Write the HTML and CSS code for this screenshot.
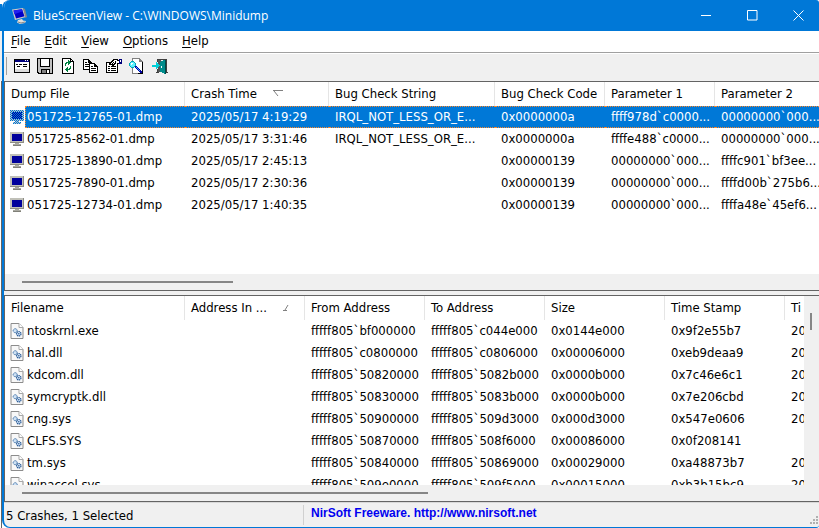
FILE: index.html
```html
<!DOCTYPE html>
<html lang="en">
<head>
    <meta charset="UTF-8">
    <meta name="viewport" content="width=device-width, initial-scale=1.0">
    <title>BlueScreenView</title>
    <link rel="stylesheet" href="styles.css">
</head>
<body>
    <!-- shared icons -->
    <svg class="defs" width="0" height="0">
        <defs>
            <pattern id="dither" width="2" height="2" patternUnits="userSpaceOnUse">
                <rect width="2" height="2" fill="#0078d7"/>
                <rect width="1" height="1" fill="#00009c"/>
                <rect x="1" y="1" width="1" height="1" fill="#00009c"/>
            </pattern>
            <pattern id="dither-light" width="2" height="2" patternUnits="userSpaceOnUse">
                <rect width="2" height="2" fill="#0078d7"/>
                <rect width="1" height="1" fill="#b8c4cc"/>
                <rect x="1" y="1" width="1" height="1" fill="#b8c4cc"/>
            </pattern>
            <symbol id="monitor" viewBox="0 0 14 16">
                <rect y="1" width="14" height="11" fill="#c0c0b8"/>
                <path d="M0 12h14v-11h-1v10h-13z" fill="#8c8c84"/>
                <rect x="2" y="3" width="10" height="7" fill="#00009c"/>
                <path d="M5 12h4v1h2v2h-8v-2h2z" fill="#a8a8a0"/>
                <path d="M3 14h8v1h-8z" fill="#808078"/>
            </symbol>
            <symbol id="monitor-selected" viewBox="0 0 14 16">
                <path d="M0 1h14v11h-5v1h2v2h-8v-2h2v-1h-5z" fill="url(#dither-light)"/>
                <path d="M2 3h10v7h-10z" fill="url(#dither)"/>
            </symbol>
            <symbol id="sysfile" viewBox="0 0 13 16">
                <path d="M.5 .5h8l4 4v11h-12z" fill="#f8f8f8" stroke="#8c8c8c"/>
                <path d="M8.500 .5v4h4" fill="#fff" stroke="#a8a8a8"/>
                <circle cx="4.700" cy="7.700" r="2" fill="#cfe2f5" stroke="#3c6ea5" stroke-dasharray="1.2 .5"/>
                <circle cx="8.300" cy="10.700" r="2.200" fill="#cfe2f5" stroke="#2c5c98" stroke-width="1.200" stroke-dasharray="1.3 .5"/>
                <circle cx="8.300" cy="10.700" r=".8" fill="#2c5c98"/>
            </symbol>
        </defs>
    </svg>

    <div class="behind">
        <div class="behind-title"></div>
        <div class="behind-bar"></div>
        <div class="behind-list"></div>
    </div>

    <div class="window">
        <header class="titlebar">
            <svg class="app-icon" width="16" height="16" viewBox="0 0 16 16">
                <path d="M1 1.500l11-1.500 3 9-11 3z" fill="#c8c8c8"/>
                <path d="M2.500 2.500l8.500-1.200 2.500 7-8.500 2.200z" fill="#0000c8"/>
                <path d="M2.500 2.500l8.500-1.200.7 2-8.500 3z" fill="#2020f0"/>
                <path d="M12 0l2 1 2 8-1.500 1z" fill="#888"/>
                <path d="M7 12l4-1 1 1.500 3 .5-1 2-5 1-3-1.500z" fill="#e0e0dc"/>
                <path d="M7 14l3 1 4-1" fill="none" stroke="#888"/>
            </svg>
            <h1>BlueScreenView - C:\WINDOWS\Minidump</h1>
            <div class="controls">
                <button type="button" aria-label="Minimize"><svg width="11" height="11"><path d="M0 5.500h10"/></svg></button>
                <button type="button" aria-label="Maximize"><svg width="11" height="11"><path d="M.5 1v9h9.500v-9.500h-9.500z"/></svg></button>
                <button type="button" aria-label="Close"><svg width="11" height="11"><path d="M.5 .5l10 10M10.500 .5l-10 10"/></svg></button>
            </div>
        </header>

        <nav class="menubar">
            <button type="button"><u>F</u>ile</button>
            <button type="button"><u>E</u>dit</button>
            <button type="button"><u>V</u>iew</button>
            <button type="button"><u>O</u>ptions</button>
            <button type="button"><u>H</u>elp</button>
        </nav>

        <div class="toolbar">
            <button type="button" aria-label="Advanced options">
                <svg viewBox="0 0 16 16">
                    <path d="M0 1h16v14h-16z" fill="#000"/>
                    <path d="M1 2h14v2h-14z" fill="#00007c"/>
                    <path d="M11 2h1v1h-1zM13 2h1v1h-1z" fill="#fff"/>
                    <path d="M1 4h14v10h-14z" fill="#fff"/>
                    <path d="M2 6h2v1h-2zM5 6h3v1h-3zM9 6h4v1h-4zM3 8h3v1h-3zM9 8h4v1h-4z" fill="#000"/>
                    <path d="M1 11h14v3h-14z" fill="#dcdcdc"/>
                </svg>
            </button>
            <button type="button" aria-label="Save">
                <svg viewBox="0 0 16 16">
                    <path d="M0 0h16v16h-15l-1-1z" fill="#000"/>
                    <path d="M1 1h2v8h10v-8h2v14h-2v-4h-9v4h-2l-1-1z" fill="#c0c0c0"/>
                    <path d="M4 1h8v7h-8z" fill="#fff"/>
                    <path d="M5 12h4v3h-4z" fill="#808080"/>
                    <path d="M10 12h2v3h-2z" fill="#fff"/>
                </svg>
            </button>
            <button type="button" aria-label="Refresh">
                <svg viewBox="0 0 16 16">
                    <path d="M2 0h9v1h1v1h1v1h1v13h-12z" fill="#000"/>
                    <path d="M3 1h7v3h3v11h-10z" fill="#fff"/>
                    <path d="M11 2h1v1h-1z" fill="#fff"/>
                    <path d="M5 5h1v-1h2v-2h1v1h1v1h1v1h-1v1h-1v1h-1v-2h-1v1h-1v2h-1z" fill="#008040"/>
                    <path d="M11 11h-1v1h-2v2h-1v-1h-1v-1h-1v-1h1v-1h1v-1h1v2h1v-1h1v-2h1z" fill="#008040"/>
                </svg>
            </button>
            <button type="button" aria-label="Copy">
                <svg viewBox="0 0 16 16">
                    <path d="M0 1h6v1h1v1h1v1h1v8h-9z" fill="#000"/>
                    <path d="M1 2h4v3h3v6h-7z" fill="#fff"/>
                    <path d="M2 4h2v1h-2zM2 6h4v1h-4zM2 8h4v1h-4z" fill="#000"/>
                    <path d="M6 5h6v1h1v1h1v1h1v7h-9z" fill="#000"/>
                    <path d="M7 6h4v3h3v5h-7z" fill="#fff"/>
                    <path d="M8 8h2v1h-2zM8 10h5v1h-5zM8 12h5v1h-5z" fill="#000"/>
                </svg>
            </button>
            <button type="button" aria-label="Properties">
                <svg viewBox="0 0 16 16">
                    <path d="M0 4h12v11h-12z" fill="#000"/>
                    <path d="M1 5h10v9h-10z" fill="#fff"/>
                    <path d="M2 8h2v1h-2zM5 8h5v1h-5zM2 10h2v1h-2zM5 10h5v1h-5zM2 12h2v1h-2zM5 12h5v1h-5z" fill="#000"/>
                    <path d="M3 5h1v-1h1v-1h1v-1h1v-1h5v1h2v4h-3v-1h-1v1h-1v1h-1v1h-2v-1h-3z" fill="#000"/>
                    <path d="M5 5h1v-1h1v-1h1v-1h3v1h2v2h-3v-1h-1v1h-1v1h-3z" fill="#fff"/>
                    <path d="M6 5h1v-1h1v1h-1v1h-1zM9 3h1v1h-1z" fill="#000"/>
                    <path d="M13 1h3v5h-3z" fill="#00007c"/>
                    <path d="M14 2h1v2h-1z" fill="#fff"/>
                </svg>
            </button>
            <button type="button" aria-label="Find">
                <svg viewBox="0 0 16 16">
                    <path d="M3 0h8v1h1v1h1v1h1v13h-11z" fill="#808080"/>
                    <path d="M4 1h6v3h3v11h-9z" fill="#fff"/>
                    <path d="M13 4h1v12h-5v-1h4z" fill="#000"/>
                    <path d="M2 3h3v1h1v1h1v3h-1v1h-1v1h-3v-1h-1v-1h-1v-3h1v-1h1z" fill="#00a8b8"/>
                    <path d="M2 4h3v1h1v3h-1v1h-3v-1h-1v-3h1z" fill="#60f0ff"/>
                    <path d="M2 5h2v1h-1v1h-1z" fill="#fff"/>
                    <path d="M6 8h2v1h1v1h1v1h1v1h1v1h1v2h-2v-1h-1v-1h-1v-1h-1v-1h-1v-1h-1z" fill="#0000a8"/>
                    <path d="M7 9h1v1h1v1h1v1h1v1h-1v-1h-1v-1h-1v-1h-1z" fill="#40a0ff"/>
                </svg>
            </button>
            <button type="button" aria-label="Exit">
                <svg viewBox="0 0 16 16">
                    <path d="M5 1h10v13h1v1h-2v-13h-8v2h-1zM5 11h1v3h1v1h-3v-1h1z" fill="#404040"/>
                    <path d="M6 2h3v12h-3z" fill="#505858"/>
                    <path d="M8 4h1v-1h2v-1h3v14h-2v-1h-2v-1h-2z" fill="#008c8c"/>
                    <path d="M13 2h1v14h-1z" fill="#004848"/>
                    <path d="M9 8h1v2h-1z" fill="#fff"/>
                    <path d="M0 7h4v-3h1v1h1v1h1v1h1v1h-1v1h-1v1h-1v1h-1v-2h-4z" fill="#00d0d8"/>
                </svg>
            </button>
        </div>

        <main class="panes">
            <section class="pane">
                <div class="list">
                    <table class="crashes">
                        <colgroup>
                            <col class="w-name"><col class="w-time"><col class="w-bug"><col class="w-param"><col class="w-param"><col class="w-param">
                        </colgroup>
                        <thead>
                            <tr>
                                <th>Dump File</th>
                                <th>Crash Time<svg class="sort" width="10" height="7"><path d="M0 .5h10M1 1l4 5" stroke="#808080"/></svg></th>
                                <th>Bug Check String</th>
                                <th>Bug Check Code</th>
                                <th>Parameter 1</th>
                                <th>Parameter 2</th>
                            </tr>
                        </thead>
                        <tbody>
                            <tr class="selected">
                                <td><div class="item"><svg><use href="#monitor-selected"/></svg><span>051725-12765-01.dmp</span></div></td>
                                <td>2025/05/17 4:19:29</td><td>IRQL_NOT_LESS_OR_E...</td><td>0x0000000a</td><td>ffff978d`c0000...</td><td>00000000`000...</td>
                            </tr>
                            <tr>
                                <td><div class="item"><svg><use href="#monitor"/></svg><span>051725-8562-01.dmp</span></div></td>
                                <td>2025/05/17 3:31:46</td><td>IRQL_NOT_LESS_OR_E...</td><td>0x0000000a</td><td>ffffe488`c0000...</td><td>00000000`000...</td>
                            </tr>
                            <tr>
                                <td><div class="item"><svg><use href="#monitor"/></svg><span>051725-13890-01.dmp</span></div></td>
                                <td>2025/05/17 2:45:13</td><td></td><td>0x00000139</td><td>00000000`000...</td><td>ffffc901`bf3ee...</td>
                            </tr>
                            <tr>
                                <td><div class="item"><svg><use href="#monitor"/></svg><span>051725-7890-01.dmp</span></div></td>
                                <td>2025/05/17 2:30:36</td><td></td><td>0x00000139</td><td>00000000`000...</td><td>ffffd00b`275b6...</td>
                            </tr>
                            <tr>
                                <td><div class="item"><svg><use href="#monitor"/></svg><span>051725-12734-01.dmp</span></div></td>
                                <td>2025/05/17 1:40:35</td><td></td><td>0x00000139</td><td>00000000`000...</td><td>ffffa48e`45ef6...</td>
                            </tr>
                        </tbody>
                    </table>
                </div>
                <div class="hscroll"><div class="thumb thumb-quarter"></div></div>
            </section>

            <section class="pane with-vscroll">
                <div class="list">
                    <table class="drivers">
                        <colgroup>
                            <col class="w-name"><col class="w-addr"><col class="w-addr"><col class="w-addr"><col class="w-addr"><col class="w-addr"><col class="w-addr">
                        </colgroup>
                        <thead>
                            <tr>
                                <th>Filename</th>
                                <th>Address In ...<svg class="sort" width="7" height="7"><path d="M0 6.500h4M2 6l3-5" stroke="#808080"/></svg></th>
                                <th>From Address</th>
                                <th>To Address</th>
                                <th>Size</th>
                                <th>Time Stamp</th>
                                <th>Ti</th>
                            </tr>
                        </thead>
                        <tbody>
                            <tr>
                                <td><div class="item"><svg><use href="#sysfile"/></svg><span>ntoskrnl.exe</span></div></td>
                                <td></td><td>fffff805`bf000000</td><td>fffff805`c044e000</td><td>0x0144e000</td><td>0x9f2e55b7</td><td>20</td>
                            </tr>
                            <tr>
                                <td><div class="item"><svg><use href="#sysfile"/></svg><span>hal.dll</span></div></td>
                                <td></td><td>fffff805`c0800000</td><td>fffff805`c0806000</td><td>0x00006000</td><td>0xeb9deaa9</td><td>20</td>
                            </tr>
                            <tr>
                                <td><div class="item"><svg><use href="#sysfile"/></svg><span>kdcom.dll</span></div></td>
                                <td></td><td>fffff805`50820000</td><td>fffff805`5082b000</td><td>0x0000b000</td><td>0x7c46e6c1</td><td>20</td>
                            </tr>
                            <tr>
                                <td><div class="item"><svg><use href="#sysfile"/></svg><span>symcryptk.dll</span></div></td>
                                <td></td><td>fffff805`50830000</td><td>fffff805`5083b000</td><td>0x0000b000</td><td>0x7e206cbd</td><td>20</td>
                            </tr>
                            <tr>
                                <td><div class="item"><svg><use href="#sysfile"/></svg><span>cng.sys</span></div></td>
                                <td></td><td>fffff805`50900000</td><td>fffff805`509d3000</td><td>0x000d3000</td><td>0x547e0606</td><td>20</td>
                            </tr>
                            <tr>
                                <td><div class="item"><svg><use href="#sysfile"/></svg><span>CLFS.SYS</span></div></td>
                                <td></td><td>fffff805`50870000</td><td>fffff805`508f6000</td><td>0x00086000</td><td>0x0f208141</td><td></td>
                            </tr>
                            <tr>
                                <td><div class="item"><svg><use href="#sysfile"/></svg><span>tm.sys</span></div></td>
                                <td></td><td>fffff805`50840000</td><td>fffff805`50869000</td><td>0x00029000</td><td>0xa48873b7</td><td>20</td>
                            </tr>
                            <tr>
                                <td><div class="item"><svg><use href="#sysfile"/></svg><span>winaccel.sys</span></div></td>
                                <td></td><td>fffff805`509e0000</td><td>fffff805`509f5000</td><td>0x00015000</td><td>0xb3b15bc9</td><td>20</td>
                            </tr>
                        </tbody>
                    </table>
                </div>
                <div class="vscroll"><div class="thumb"></div></div>
                <div class="hscroll"><div class="thumb thumb-half"></div></div>
            </section>
        </main>

        <footer class="statusbar">
            <div class="count">5 Crashes, 1 Selected</div>
            <a href="http://www.nirsoft.net">NirSoft Freeware. http://www.nirsoft.net</a>
            <svg class="grip" width="9" height="9"><path d="M6 0h2v2h-2zM3 3h2v2h-2zM6 3h2v2h-2zM0 6h2v2h-2zM3 6h2v2h-2zM6 6h2v2h-2z" fill="#b0b0b0"/></svg>
        </footer>
    </div>
</body>
</html>
```
FILE: styles.css
```css
* {
    box-sizing: border-box;
}
body {
    margin: 0;
    height: 100vh;
    display: flex;
    overflow: hidden;
    background-color: #fff;
    color: #000;
    font-family: "DejaVu Sans Condensed", "DejaVu Sans", sans-serif;
    font-size: 13px;
}
button {
    margin: 0;
    padding: 0;
    border: none;
    background: none;
    color: inherit;
    font: inherit;
}
.defs {
    position: absolute;
}

/* sliver of the window underneath */
.behind {
    width: 2px;
    display: flex;
    flex-direction: column;
}
.behind-title {
    height: 31px;
    border-top: 4px solid #fff;
    background-color: #0078d7;
}
.behind-bar {
    height: 50px;
    background-color: #f0f0f0;
}
.behind-list {
    flex: 1;
    border-right: 1px solid #646464;
}

.window {
    flex: 1;
    min-width: 0;
    display: flex;
    flex-direction: column;
    overflow: hidden;
    border-left: 2px solid #0078d7;
    border-bottom: 1px solid #0078d7;
    border-radius: 8px 3px 3px 8px;
    background-color: #f0f0f0;
}

.titlebar {
    height: 31px;
    display: flex;
    align-items: center;
    padding-left: 7px;
    background-color: #0078d7;
    color: #fff;
}
.titlebar h1 {
    flex: 1;
    margin: 0 0 0 6px;
    font: 12px "Open Sans", sans-serif;
}
.controls {
    display: flex;
    gap: 4px;
}
.controls button {
    width: 42px;
    height: 31px;
    display: flex;
    align-items: center;
    justify-content: center;
}
.controls path {
    fill: none;
    stroke: #fff;
}

.menubar {
    height: 22px;
    display: flex;
    padding-bottom: 2px;
    border-bottom: 1px solid #a0a0a0;
    background-color: #fff;
}
.menubar button {
    padding: 0 7px;
}
.menubar u {
    text-underline-offset: 2px;
}

.toolbar {
    height: 28px;
    display: flex;
    align-items: center;
    padding: 0 0 4px 2px;
    border-top: 1px solid #fff;
}
.toolbar::before {
    content: "";
    width: 1px;
    height: 18px;
    margin-right: 4px;
    background-color: #a0a0a0;
}
.toolbar button {
    width: 23px;
    height: 22px;
    display: flex;
    align-items: center;
    justify-content: center;
}
.toolbar svg {
    width: 16px;
    height: 16px;
    margin-right: 1px;
    shape-rendering: crispEdges;
}

.panes {
    flex: 1;
    min-height: 0;
    display: grid;
    grid-template-columns: minmax(0, 1fr);
    grid-template-rows: minmax(0, 210fr) minmax(0, 207fr);
    gap: 4px;
}
.pane {
    display: grid;
    grid-template-columns: minmax(0, 1fr);
    grid-template-rows: minmax(0, 1fr) 16px;
    border: solid #646464;
    border-width: 1px 0 1px 1px;
}
.with-vscroll {
    grid-template-columns: minmax(0, 1fr) 15px;
}
.list {
    overflow: hidden;
    background-color: #fff;
}

table {
    table-layout: fixed;
    border-spacing: 0;
}
.crashes {
    width: 820px;
}
.drivers {
    width: 900px;
}
.w-name {
    width: 180px;
}
.w-time {
    width: 144px;
}
.w-bug {
    width: 166px;
}
.w-param {
    width: 110px;
}
.w-addr {
    width: 120px;
}
th {
    height: 24px;
    padding: 0 0 2px 6px;
    border-right: 1px solid #e5e5e5;
    font-weight: normal;
    text-align: left;
    white-space: nowrap;
}
td {
    height: 22px;
    padding: 0 0 0 6px;
    line-height: 20px;
    white-space: nowrap;
}
td:first-child {
    padding-left: 5px;
}
.sort {
    margin-left: 16px;
    vertical-align: 1px;
}
.item {
    display: flex;
    align-items: center;
}
.item svg {
    width: 14px;
    height: 16px;
    margin-right: 1px;
    flex: none;
}
.item span {
    flex: 1;
    padding-left: 2px;
}
.selected {
    color: #fff;
}
.selected td:not(:first-child),
.selected span {
    border: dotted #ff8728;
    border-width: 1px 0;
    background-color: #0078d7;
}
.selected span {
    border-left-width: 1px;
    padding-left: 1px;
}

.hscroll {
    grid-column: 1 / -1;
    padding: 7px 17px;
}
.vscroll {
    padding: 17px 6px;
}
.thumb {
    height: 2px;
    background-color: #868686;
}
.vscroll .thumb {
    width: 2px;
    height: 17px;
}
.thumb-quarter {
    width: 27%;
}
.thumb-half {
    width: 52%;
}

.statusbar {
    height: 25px;
    display: flex;
    align-items: center;
    padding-left: 2px;
    box-shadow: inset 0 2px 0 -1px #d8d8d8;
}
.count {
    flex: 0 0 298px;
    height: 20px;
    border-right: 1px solid #d0d0d0;
    line-height: 22px;
}
.statusbar a {
    flex: 1;
    padding: 0 0 4px 7px;
    color: #0000f0;
    font: bold 12px "Liberation Sans", sans-serif;
    text-decoration: none;
}
.grip {
    align-self: flex-end;
    margin-bottom: 2px;
}
```
